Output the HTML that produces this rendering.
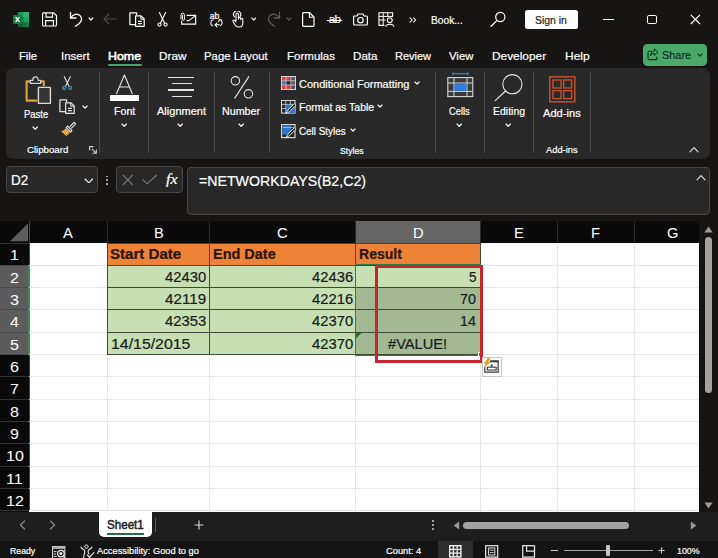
<!DOCTYPE html><html><head><meta charset="utf-8"><title>Excel</title><style>
*{box-sizing:border-box;margin:0;padding:0}
html,body{width:718px;height:558px;overflow:hidden;background:#171513}
body{position:relative;font-family:"Liberation Sans",sans-serif;color:#fff;font-size:12px}
.a{position:absolute}
.t{position:absolute;white-space:nowrap;line-height:1;transform-origin:0 0;-webkit-text-stroke:0.2px}
#ribbon{left:6px;top:68.4px;width:703.5px;height:90.8px;background:#292929;border-radius:7px}
.sep{position:absolute;width:1px;background:#4a4a4a;top:72px;height:81px}
.box{position:absolute;border:1px solid #484848;border-radius:4px;background:#282828}
#grid{left:0;top:221px;width:699px;height:290.6px;background:#fff;overflow:hidden}
.ch{position:absolute;top:0;height:22px;background:#0a0a0a}
.rh{position:absolute;left:0;width:29.4px;background:#0a0a0a}
.gl{position:absolute;background:#e7e7e7}
.c{position:absolute}
</style></head><body>
<svg class="a" style="left:13px;top:12px;" width="16" height="15" viewBox="0 0 16 15" fill="none"><rect x="5" y="0" width="11" height="15" rx="1.2" fill="#1f9c60"/>
<rect x="10.5" y="0" width="5.5" height="5" fill="#2db274"/><rect x="10.5" y="5" width="5.5" height="5" fill="#21a366"/>
<rect x="5" y="5" width="5.5" height="5" fill="#107c41"/><rect x="5" y="10" width="5.5" height="5" fill="#185c37"/><rect x="10.5" y="10" width="5.5" height="5" fill="#107c41"/>
<rect x="0" y="3" width="9" height="9" rx="1" fill="#107c41"/>
<path d="M2.6 5.2 L6.4 9.8 M6.4 5.2 L2.6 9.8" stroke="#fff" stroke-width="1.2"/></svg>
<svg class="a" style="left:42px;top:12px;" width="16" height="15" viewBox="0 0 16 15" fill="none"><path d="M1.5 0.8 H11.5 L14.5 3.6 V13 a1 1 0 0 1 -1 1 H1.5 a1 1 0 0 1 -1 -1 V1.8 a1 1 0 0 1 1 -1 Z" stroke="#fff" stroke-width="1.2"/>
<path d="M4 1 V5.2 H10.5 V1" stroke="#fff" stroke-width="1.2"/><path d="M3.6 14 V8.6 H11.4 V14" stroke="#fff" stroke-width="1.2"/></svg>
<svg class="a" style="left:69px;top:11px;" width="14" height="16" viewBox="0 0 14 16" fill="none"><path d="M1.5 1.5 V7 H7" stroke="#fff" stroke-width="1.3" stroke-linecap="round" stroke-linejoin="round"/>
<path d="M1.8 6.8 C4 3.2 8.5 2.2 11 4.6 C13.6 7.2 12.6 10.4 10.2 12.4 L6.5 15.2" stroke="#fff" stroke-width="1.3" stroke-linecap="round"/></svg>
<svg class="a" style="left:87.91px;top:17.17px;" width="5.771999999999999" height="4.064" viewBox="0 0 5.771999999999999 4.064" fill="none"><path d="M1 1 L2.8859999999999997 3.064 L4.771999999999999 1" stroke="#fff" stroke-width="1.15" stroke-linecap="round" stroke-linejoin="round"/></svg>
<svg class="a" style="left:103px;top:13px;" width="14" height="12" viewBox="0 0 14 12" fill="none"><path d="M13.5 6 H1.2 M6 1 L1 6 L6 11" stroke="#4e4e4e" stroke-width="1.15" stroke-linecap="round" stroke-linejoin="round"/></svg>
<svg class="a" style="left:128.6px;top:12px;" width="16" height="15" viewBox="0 0 16 15" fill="none"><path d="M6 12.6 H0.9 V0.8 H7.6 V3" stroke="#fff" stroke-width="1.2" stroke-linejoin="round"/>
<path d="M6.6 3.8 H12 L15.2 7 V14.3 H6.6 Z" stroke="#fff" stroke-width="1.2" stroke-linejoin="round"/>
<path d="M11.8 4 V7.2 H15" stroke="#fff" stroke-width="1"/><path d="M9 9.4 H12.8 M9 11.6 H12.8" stroke="#fff" stroke-width="1.1"/></svg>
<svg class="a" style="left:157px;top:12px;" width="11" height="15" viewBox="0 0 11 15" fill="none"><path d="M2.4 0.6 L7.4 10.8 M8.6 0.6 L3.6 10.8" stroke="#fff" stroke-width="1.1" stroke-linecap="round"/>
<circle cx="2.5" cy="12.6" r="1.6" stroke="#fff" stroke-width="1.05"/><circle cx="8.5" cy="12.6" r="1.6" stroke="#fff" stroke-width="1.05"/></svg>
<svg class="a" style="left:180px;top:11.6px;" width="17" height="14" viewBox="0 0 17 14" fill="none"><path d="M6.6 3.4 H15.6 V12.2 H1.6 V9" stroke="#fff" stroke-width="1.2"/><path d="M15.6 3.6 L8.4 9 L6.6 8.2" stroke="#fff" stroke-width="1.05"/>
<path d="M1 7 V2.8 a1.7 1.7 0 0 1 3.4 0 V7.4 a1 1 0 0 1 -2 0 V3.2" stroke="#fff" stroke-width="1" stroke-linecap="round"/></svg>
<span class="t" style="left:209.8px;top:11.6px;font-size:8.6px;color:#fff;letter-spacing:-0.2px">ab</span>
<svg class="a" style="left:209px;top:18.6px;" width="15" height="9" viewBox="0 0 15 9" fill="none"><path d="M4.4 0.8 C1.2 1.2 0.8 5.6 3.6 6.8" stroke="#fff" stroke-width="1.05" stroke-linecap="round"/>
<path d="M10.4 5.8 H6.2 M8 3.8 L6 5.8 L8 7.8" stroke="#fff" stroke-width="1.05" stroke-linecap="round" stroke-linejoin="round"/>
<path d="M10.6 0.6 C13.6 1.4 13.8 5 11.6 6.6 M9.6 2.6 L10.6 0.5 L12.8 1.2" stroke="#fff" stroke-width="1.05" stroke-linecap="round" stroke-linejoin="round"/></svg>
<svg class="a" style="left:231px;top:11px;" width="14" height="17" viewBox="0 0 14 17" fill="none"><path d="M5 9.5 V3.2 a1.2 1.2 0 0 1 2.4 0 V8 M7.4 7.4 a1.1 1.1 0 0 1 2.2 0.2 V8.6 M9.6 8.2 a1.1 1.1 0 0 1 2.2 0.3 V11.5 C11.8 14 10.6 16 8.4 16 H7.4 C5.6 16 4.6 15 3.6 13.2 L2 10.4 C1.6 9.4 2.8 8.6 3.6 9.4 L5 11" stroke="#fff" stroke-width="1.1" stroke-linecap="round" stroke-linejoin="round"/>
<path d="M3.4 5.8 A3.6 3.6 0 1 1 9.2 5.4" stroke="#fff" stroke-width="1.1" stroke-linecap="round"/></svg>
<svg class="a" style="left:250.51px;top:17.17px;" width="5.771999999999999" height="4.064" viewBox="0 0 5.771999999999999 4.064" fill="none"><path d="M1 1 L2.8859999999999997 3.064 L4.771999999999999 1" stroke="#fff" stroke-width="1.15" stroke-linecap="round" stroke-linejoin="round"/></svg>
<svg class="a" style="left:267px;top:11px;" width="14" height="16" viewBox="0 0 14 16" fill="none"><path d="M12.5 1.5 V7 H7" stroke="#5a5a5a" stroke-width="1.3" stroke-linecap="round" stroke-linejoin="round"/>
<path d="M12.2 6.8 C10 3.2 5.5 2.2 3 4.6 C0.4 7.2 1.4 10.4 3.8 12.4 L7.5 15.2" stroke="#5a5a5a" stroke-width="1.3" stroke-linecap="round"/></svg>
<svg class="a" style="left:285.91px;top:17.17px;" width="5.771999999999999" height="4.064" viewBox="0 0 5.771999999999999 4.064" fill="none"><path d="M1 1 L2.8859999999999997 3.064 L4.771999999999999 1" stroke="#5a5a5a" stroke-width="1.15" stroke-linecap="round" stroke-linejoin="round"/></svg>
<svg class="a" style="left:302px;top:12px;" width="13" height="15" viewBox="0 0 13 15" fill="none"><path d="M1.6 0.7 H7.6 L12 5 V13.3 a1 1 0 0 1 -1 1 H1.6 a1 1 0 0 1 -1 -1 V1.7 a1 1 0 0 1 1 -1 Z" stroke="#fff" stroke-width="1.2"/><path d="M7.4 0.9 V5.2 H11.8" stroke="#fff" stroke-width="1.1"/></svg>
<span class="t" style="left:328.8px;top:14.2px;font-size:11.5px;color:#fff;letter-spacing:-0.6px">ab</span>
<div class="a" style="left:327.2px;top:20.2px;width:15px;height:1.1px;background:#fff"></div>
<svg class="a" style="left:353px;top:12.6px;" width="15" height="13" viewBox="0 0 15 13" fill="none"><path d="M1.6 3 H4 L5 1 H10 L11 3 H13.4 a1 1 0 0 1 1 1 V11 a1 1 0 0 1 -1 1 H1.6 a1 1 0 0 1 -1 -1 V4 a1 1 0 0 1 1 -1 Z" stroke="#fff" stroke-width="1.2"/><circle cx="7.5" cy="7.2" r="2.7" stroke="#fff" stroke-width="1.2"/></svg>
<svg class="a" style="left:378px;top:12px;" width="17" height="15" viewBox="0 0 17 15" fill="none"><path d="M6.5 13.4 H1 V0.8 H14.6 V5" stroke="#fff" stroke-width="1.1"/><path d="M1 4.4 H14.6 M1 8 H7.5 M5.2 0.8 V13.4 M9.8 0.8 V5" stroke="#fff" stroke-width="1"/>
<circle cx="11.8" cy="8.2" r="2.4" stroke="#fff" stroke-width="1.1"/><path d="M7.8 14.6 C8 11.4 15.6 11.4 15.8 14.6" stroke="#fff" stroke-width="1.1"/></svg>
<svg class="a" style="left:408.6px;top:17.4px;" width="8" height="6" viewBox="0 0 8 6" fill="none"><path d="M1 0.8 L3.2 3 L1 5.2 M4.6 0.8 L6.8 3 L4.6 5.2" stroke="#fff" stroke-width="1.05" stroke-linecap="round" stroke-linejoin="round"/></svg>
<span class="t" style="left:431.30px;top:14.90px;font-size:10.8px;color:#fff;transform:scaleX(0.9452);">Book...</span>
<svg class="a" style="left:490px;top:11px;" width="16" height="16" viewBox="0 0 16 16" fill="none"><circle cx="10.3" cy="6" r="4.6" stroke="#fff" stroke-width="1.2"/><path d="M7 9.4 L1.2 15.2" stroke="#fff" stroke-width="1.3" stroke-linecap="round"/></svg>
<div class="a" style="left:525.2px;top:10.4px;width:52.4px;height:18.4px;background:#fff;border-radius:2.5px"></div>
<span class="t" style="left:535.30px;top:14.90px;font-size:10.8px;color:#1a1a1a;transform:scaleX(0.9653);">Sign in</span>
<div class="a" style="left:602.5px;top:19px;width:11.5px;height:1.2px;background:#fff"></div>
<div class="a" style="left:647.2px;top:14.6px;width:9.8px;height:9.8px;border:1.2px solid #fff;border-radius:1.8px"></div>
<svg class="a" style="left:690.2px;top:14.2px;" width="11" height="11" viewBox="0 0 11 11" fill="none"><path d="M0.8 0.8 L10 10 M10 0.8 L0.8 10" stroke="#fff" stroke-width="1.2"/></svg>
<span class="t" style="left:18.50px;top:50.60px;font-size:11.4px;color:#fff;transform:scaleX(0.9862);">File</span>
<span class="t" style="left:61.20px;top:50.60px;font-size:11.4px;color:#fff;transform:scaleX(1.0035);">Insert</span>
<span class="t" style="left:108.30px;top:50.60px;font-size:11.4px;color:#fff;transform:scaleX(1.0875);-webkit-text-stroke:0.55px">Home</span>
<span class="t" style="left:158.50px;top:50.60px;font-size:11.4px;color:#fff;transform:scaleX(1.0331);">Draw</span>
<span class="t" style="left:204.00px;top:50.60px;font-size:11.4px;color:#fff;transform:scaleX(0.9967);">Page Layout</span>
<span class="t" style="left:286.90px;top:50.60px;font-size:11.4px;color:#fff;transform:scaleX(1.0118);">Formulas</span>
<span class="t" style="left:353.00px;top:50.60px;font-size:11.4px;color:#fff;transform:scaleX(1.0203);">Data</span>
<span class="t" style="left:394.60px;top:50.60px;font-size:11.4px;color:#fff;transform:scaleX(0.9654);">Review</span>
<span class="t" style="left:449.00px;top:50.60px;font-size:11.4px;color:#fff;transform:scaleX(0.9955);">View</span>
<span class="t" style="left:492.40px;top:50.60px;font-size:11.4px;color:#fff;transform:scaleX(1.0426);">Developer</span>
<span class="t" style="left:564.60px;top:50.60px;font-size:11.4px;color:#fff;transform:scaleX(1.0501);">Help</span>
<div class="a" style="left:108px;top:63.8px;width:34px;height:1.9px;background:#45a66c;border-radius:1px"></div>
<div class="a" style="left:643px;top:43.6px;width:63.6px;height:22px;background:#49a86a;border-radius:4.5px"></div>
<svg class="a" style="left:647px;top:48.2px;" width="12" height="13" viewBox="0 0 12 13" fill="none"><path d="M4.5 3.2 H2.2 a1.2 1.2 0 0 0 -1.2 1.2 V10.4 a1.2 1.2 0 0 0 1.2 1.2 H8.6 a1.2 1.2 0 0 0 1.2 -1.2 V9" stroke="#0e2e1a" stroke-width="1.1" stroke-linecap="round"/>
<path d="M7.4 1 L11 4.2 L7.4 7.4 V5.4 C5.4 5.4 4.2 6.2 3.4 8 C3.6 5 5 3.2 7.4 3 Z" stroke="#0e2e1a" stroke-width="1" stroke-linejoin="round"/></svg>
<span class="t" style="left:662.40px;top:49.60px;font-size:11.4px;color:#0e2e1a;transform:scaleX(0.9560);">Share</span>
<svg class="a" style="left:696.91px;top:53.17px;" width="5.771999999999999" height="4.064" viewBox="0 0 5.771999999999999 4.064" fill="none"><path d="M1 1 L2.8859999999999997 3.064 L4.771999999999999 1" stroke="#0e2e1a" stroke-width="1.15" stroke-linecap="round" stroke-linejoin="round"/></svg>
<div id="ribbon" class="a"></div>
<div class="sep" style="left:99.2px"></div>
<div class="sep" style="left:148px"></div>
<div class="sep" style="left:214.2px"></div>
<div class="sep" style="left:269.2px"></div>
<div class="sep" style="left:435px"></div>
<div class="sep" style="left:484px"></div>
<div class="sep" style="left:533.2px"></div>
<div class="sep" style="left:590px"></div>
<svg class="a" style="left:24px;top:75px;" width="29" height="30" viewBox="0 0 29 30" fill="none"><path d="M6.4 6.4 H2.6 V25.6 H13" stroke="#dfa040" stroke-width="2.1" stroke-linejoin="round"/><path d="M16.6 6.4 H19.8 V11" stroke="#dfa040" stroke-width="2.1" stroke-linejoin="round"/>
<path d="M6.4 8.4 V5.4 H8.8 C8.8 0.8 14.2 0.8 14.2 5.4 H16.6 V8.4 Z" stroke="#d4d4d4" stroke-width="1.2" fill="#292929" stroke-linejoin="round"/>
<rect x="14.4" y="12.4" width="12" height="16" rx="0.5" stroke="#dadada" stroke-width="1.4" fill="#353535"/></svg>
<span class="t" style="left:23.80px;top:108.90px;font-size:10.8px;color:#fff;transform:scaleX(0.8770);">Paste</span>
<svg class="a" style="left:32.19px;top:125.8px;" width="6.428" height="4.4079999999999995" viewBox="0 0 6.428 4.4079999999999995" fill="none"><path d="M1 1 L3.214 3.408 L5.428 1" stroke="#fff" stroke-width="1.15" stroke-linecap="round" stroke-linejoin="round"/></svg>
<svg class="a" style="left:62.4px;top:76px;" width="11" height="15" viewBox="0 0 11 15" fill="none"><path d="M2.2 0.6 L6.8 9.8 M8.4 0.6 L3.8 9.8" stroke="#e8e8e8" stroke-width="1.05" stroke-linecap="round"/>
<circle cx="2.4" cy="11.8" r="1.55" stroke="#4a9be0" stroke-width="1.15"/><circle cx="8.2" cy="11.8" r="1.55" stroke="#4a9be0" stroke-width="1.15"/></svg>
<svg class="a" style="left:59.4px;top:98.8px;" width="16" height="15" viewBox="0 0 16 15" fill="none"><path d="M6 12.6 H0.9 V0.8 H7.6 V3" stroke="#e8e8e8" stroke-width="1.2" stroke-linejoin="round"/>
<path d="M6.6 3.8 H12 L15.2 7 V14.3 H6.6 Z" stroke="#e8e8e8" stroke-width="1.2" stroke-linejoin="round"/>
<path d="M11.8 4 V7.2 H15" stroke="#e8e8e8" stroke-width="1"/><path d="M9 9.4 H12.8 M9 11.6 H12.8" stroke="#e8e8e8" stroke-width="1.1"/></svg>
<svg class="a" style="left:81.55px;top:104.88px;" width="6.1" height="4.236000000000001" viewBox="0 0 6.1 4.236000000000001" fill="none"><path d="M1 1 L3.05 3.236 L5.1 1" stroke="#fff" stroke-width="1.15" stroke-linecap="round" stroke-linejoin="round"/></svg>
<svg class="a" style="left:60px;top:122px;" width="16" height="15" viewBox="0 0 16 15" fill="none"><path d="M9.6 4.8 L13.4 1 a1.1 1.1 0 0 1 1.6 1.6 L11.2 6.4" stroke="#e8e8e8" stroke-width="1.1" stroke-linejoin="round"/>
<path d="M7.6 4.2 L12 8.6 L10.6 10 L6.2 5.6 Z" stroke="#e8e8e8" stroke-width="1.1" stroke-linejoin="round" />
<path d="M5.6 6.2 L10 10.6 L6.4 14 L0.8 9.2 C2.8 9 4.4 8 5.6 6.2 Z" fill="#e6a23c"/></svg>
<span class="t" style="left:26.80px;top:144.90px;font-size:9.8px;color:#fff;transform:scaleX(0.9846);">Clipboard</span>
<svg class="a" style="left:88.8px;top:146.2px;" width="9" height="9" viewBox="0 0 9 9" fill="none"><path d="M0.6 4.6 V0.6 H4.6" stroke="#d0d0d0" stroke-width="1.1"/><path d="M2.8 2.8 L7.2 7.2 M7.3 3.4 V7.3 H3.4" stroke="#d0d0d0" stroke-width="1.1"/></svg>
<svg class="a" style="left:115px;top:74px;" width="19" height="21" viewBox="0 0 19 21" fill="none"><path d="M1.4 20 L9.4 1 L17.4 20 M4.4 13 H14.4" stroke="#e8e8e8" stroke-width="1.1" stroke-linejoin="round"/></svg>
<div class="a" style="left:110px;top:94.8px;width:29.4px;height:6.6px;background:#fff"></div>
<span class="t" style="left:113.80px;top:105.95px;font-size:10.7px;color:#fff;transform:scaleX(0.9953);">Font</span>
<svg class="a" style="left:120.79px;top:123.1px;" width="6.428" height="4.4079999999999995" viewBox="0 0 6.428 4.4079999999999995" fill="none"><path d="M1 1 L3.214 3.408 L5.428 1" stroke="#fff" stroke-width="1.15" stroke-linecap="round" stroke-linejoin="round"/></svg>
<div class="a" style="left:168.2px;top:77px;width:26.3px;height:1.3px;background:#e4e4e4"></div>
<div class="a" style="left:171.5px;top:83.2px;width:20.0px;height:1.3px;background:#e4e4e4"></div>
<div class="a" style="left:168.2px;top:89.4px;width:26.3px;height:1.3px;background:#e4e4e4"></div>
<div class="a" style="left:171.5px;top:95.5px;width:20.0px;height:1.3px;background:#e4e4e4"></div>
<span class="t" style="left:156.90px;top:105.95px;font-size:10.7px;color:#fff;transform:scaleX(1.0323);">Alignment</span>
<svg class="a" style="left:177.29px;top:123.1px;" width="6.428" height="4.4079999999999995" viewBox="0 0 6.428 4.4079999999999995" fill="none"><path d="M1 1 L3.214 3.408 L5.428 1" stroke="#fff" stroke-width="1.15" stroke-linecap="round" stroke-linejoin="round"/></svg>
<svg class="a" style="left:230px;top:75px;" width="24" height="25" viewBox="0 0 24 25" fill="none"><circle cx="5.4" cy="5.8" r="4.2" stroke="#e8e8e8" stroke-width="1.1"/><circle cx="18.4" cy="18.8" r="4.2" stroke="#e8e8e8" stroke-width="1.1"/><path d="M19 1.4 L4.6 23.4" stroke="#e8e8e8" stroke-width="1.1"/></svg>
<span class="t" style="left:222.30px;top:105.95px;font-size:10.7px;color:#fff;transform:scaleX(1.0016);">Number</span>
<svg class="a" style="left:238.19px;top:123.1px;" width="6.428" height="4.4079999999999995" viewBox="0 0 6.428 4.4079999999999995" fill="none"><path d="M1 1 L3.214 3.408 L5.428 1" stroke="#fff" stroke-width="1.15" stroke-linecap="round" stroke-linejoin="round"/></svg>
<svg class="a" style="left:280.5px;top:76.2px;" width="15" height="14" viewBox="0 0 15 14" fill="none"><rect x="0.5" y="0.5" width="14" height="13" fill="#2a2a2a" stroke="#d8d8d8" stroke-width="1"/>
<rect x="1" y="1" width="8.6" height="3.4" fill="#e23c3c"/><rect x="1" y="9.4" width="8.6" height="3.6" fill="#e23c3c"/>
<rect x="1.2" y="5.2" width="3.2" height="3.6" fill="#3b7fd6"/><rect x="10.4" y="1" width="3.6" height="12" fill="#555"/>
<path d="M0.5 4.8 H14.5 M0.5 9 H14.5 M5 0.5 V13.5 M10 0.5 V13.5" stroke="#d8d8d8" stroke-width="0.8"/></svg>
<span class="t" style="left:299.10px;top:78.90px;font-size:10.8px;color:#fff;transform:scaleX(1.0170);">Conditional Formatting</span>
<svg class="a" style="left:413.75px;top:80.88px;" width="6.1" height="4.236000000000001" viewBox="0 0 6.1 4.236000000000001" fill="none"><path d="M1 1 L3.05 3.236 L5.1 1" stroke="#fff" stroke-width="1.15" stroke-linecap="round" stroke-linejoin="round"/></svg>
<svg class="a" style="left:280.5px;top:100px;" width="16" height="15" viewBox="0 0 16 15" fill="none"><rect x="0.5" y="0.5" width="13.6" height="12.6" fill="#2a2a2a" stroke="#d8d8d8" stroke-width="1"/>
<path d="M0.5 4.4 H14 M0.5 8.6 H14 M4.8 0.5 V13 M9.4 0.5 V13" stroke="#d8d8d8" stroke-width="0.8"/>
<rect x="5.2" y="4.8" width="8.6" height="8" fill="#2f78d0"/>
<path d="M13.4 3.6 L7 10 L4.6 13.8 L8.6 11.6 L15 5.2 Z" fill="#2a2a2a" stroke="#f0f0f0" stroke-width="0.9" stroke-linejoin="round"/></svg>
<span class="t" style="left:299.10px;top:101.90px;font-size:10.8px;color:#fff;transform:scaleX(0.9738);">Format as Table</span>
<svg class="a" style="left:376.75px;top:104.38px;" width="6.1" height="4.236000000000001" viewBox="0 0 6.1 4.236000000000001" fill="none"><path d="M1 1 L3.05 3.236 L5.1 1" stroke="#fff" stroke-width="1.15" stroke-linecap="round" stroke-linejoin="round"/></svg>
<svg class="a" style="left:280.5px;top:123.6px;" width="16" height="15" viewBox="0 0 16 15" fill="none"><rect x="0.6" y="0.6" width="13.4" height="13" fill="#2a2a2a" stroke="#d8d8d8" stroke-width="1.2"/>
<rect x="1.6" y="1.6" width="8.6" height="9" fill="#2f78d0"/><path d="M1.6 3.4 H13" stroke="#d8d8d8" stroke-width="0.7"/>
<path d="M13.4 3.6 L7 10 L4.6 13.8 L8.6 11.6 L15 5.2 Z" fill="#2a2a2a" stroke="#f0f0f0" stroke-width="0.9" stroke-linejoin="round"/></svg>
<span class="t" style="left:299.10px;top:125.90px;font-size:10.8px;color:#fff;transform:scaleX(0.9132);">Cell Styles</span>
<svg class="a" style="left:349.55px;top:128.38px;" width="6.1" height="4.236000000000001" viewBox="0 0 6.1 4.236000000000001" fill="none"><path d="M1 1 L3.05 3.236 L5.1 1" stroke="#fff" stroke-width="1.15" stroke-linecap="round" stroke-linejoin="round"/></svg>
<span class="t" style="left:340.20px;top:145.90px;font-size:9.8px;color:#fff;transform:scaleX(0.8837);">Styles</span>
<svg class="a" style="left:446.5px;top:72px;" width="27" height="26" viewBox="0 0 27 26" fill="none"><path d="M6 1.8 H21 M6 0.4 V3.2 M21 0.4 V3.2" stroke="#4a9be0" stroke-width="1.1"/>
<rect x="0.8" y="5.6" width="25" height="19" stroke="#d8d8d8" stroke-width="1.1" fill="#3a3a3a"/>
<path d="M0.8 11 H25.8 M0.8 19.4 H25.8 M7 5.6 V24.6 M20 5.6 V24.6" stroke="#d8d8d8" stroke-width="1"/>
<rect x="7.5" y="11.5" width="12" height="7.4" fill="#2f7fe0"/></svg>
<span class="t" style="left:449.30px;top:105.95px;font-size:10.7px;color:#fff;transform:scaleX(0.8737);">Cells</span>
<svg class="a" style="left:456.09px;top:123.1px;" width="6.428" height="4.4079999999999995" viewBox="0 0 6.428 4.4079999999999995" fill="none"><path d="M1 1 L3.214 3.408 L5.428 1" stroke="#fff" stroke-width="1.15" stroke-linecap="round" stroke-linejoin="round"/></svg>
<svg class="a" style="left:494px;top:73px;" width="30" height="29" viewBox="0 0 30 29" fill="none"><circle cx="18.4" cy="11.2" r="9.6" stroke="#e8e8e8" stroke-width="1.1"/><path d="M11.6 18 L1.2 27.6" stroke="#e8e8e8" stroke-width="1.2" stroke-linecap="round"/></svg>
<span class="t" style="left:492.70px;top:105.95px;font-size:10.7px;color:#fff;transform:scaleX(0.9804);">Editing</span>
<svg class="a" style="left:505.29px;top:123.1px;" width="6.428" height="4.4079999999999995" viewBox="0 0 6.428 4.4079999999999995" fill="none"><path d="M1 1 L3.214 3.408 L5.428 1" stroke="#fff" stroke-width="1.15" stroke-linecap="round" stroke-linejoin="round"/></svg>
<svg class="a" style="left:549px;top:75.6px;" width="27" height="27" viewBox="0 0 27 27" fill="none"><rect x="0.8" y="0.8" width="25" height="25" stroke="#c9502c" stroke-width="1.5"/>
<rect x="4" y="4" width="8" height="8" stroke="#c9502c" stroke-width="1.4"/><rect x="14.6" y="4" width="8" height="8" stroke="#c9502c" stroke-width="1.4"/>
<rect x="4" y="14.6" width="8" height="8" stroke="#c9502c" stroke-width="1.4"/><rect x="14.6" y="14.6" width="8" height="8" stroke="#c9502c" stroke-width="1.4"/></svg>
<span class="t" style="left:543.30px;top:107.90px;font-size:10.8px;color:#fff;transform:scaleX(1.0297);">Add-ins</span>
<span class="t" style="left:545.80px;top:144.90px;font-size:9.8px;color:#fff;transform:scaleX(0.9512);">Add-ins</span>
<svg class="a" style="left:689.4px;top:145.6px;" width="10" height="7" viewBox="0 0 10 7" fill="none"><path d="M1 5.8 L5 1.6 L9 5.8" stroke="#e0e0e0" stroke-width="1.15" stroke-linecap="round" stroke-linejoin="round"/></svg>
<div class="box" style="left:6.2px;top:166px;width:92px;height:27px"></div>
<span class="t" style="left:11.40px;top:173.90px;font-size:13.8px;color:#fff;transform:scaleX(0.9794);">D2</span>
<svg class="a" style="left:83.75px;top:177.71px;" width="9.708" height="5.784000000000001" viewBox="0 0 9.708 5.784000000000001" fill="none"><path d="M1 1 L4.854 4.784000000000001 L8.708 1" stroke="#fff" stroke-width="1.1" stroke-linecap="round" stroke-linejoin="round"/></svg>
<div class="a" style="left:106.2px;top:175.6px;width:1.8px;height:1.8px;background:#d0d0d0;border-radius:1px"></div>
<div class="a" style="left:106.2px;top:179.4px;width:1.8px;height:1.8px;background:#d0d0d0;border-radius:1px"></div>
<div class="a" style="left:106.2px;top:183.2px;width:1.8px;height:1.8px;background:#d0d0d0;border-radius:1px"></div>
<div class="box" style="left:116px;top:166px;width:67px;height:27px"></div>
<svg class="a" style="left:122.4px;top:174.3px;" width="12" height="12" viewBox="0 0 12 12" fill="none"><path d="M0.8 0.8 L10.8 10.8 M10.8 0.8 L0.8 10.8" stroke="#808080" stroke-width="1.1"/></svg>
<svg class="a" style="left:142px;top:174.3px;" width="16" height="11" viewBox="0 0 16 11" fill="none"><path d="M0.8 5.6 L5 9.8 L15 0.8" stroke="#808080" stroke-width="1.1"/></svg>
<span class="t" style="left:166.40px;top:171.05px;font-size:15.5px;color:#fff;transform:scaleX(1.0394);font-family:'Liberation Serif',serif;font-style:italic;">fx</span>
<div class="box" style="left:187px;top:166.5px;width:522.5px;height:48.2px"></div>
<span class="t" style="left:198.90px;top:174.10px;font-size:14.4px;color:#fff;transform:scaleX(0.9842);">=NETWORKDAYS(B2,C2)</span>
<svg class="a" style="left:696.4px;top:174.2px;" width="10" height="7" viewBox="0 0 10 7" fill="none"><path d="M1 5.8 L5 1.6 L9 5.8" stroke="#e0e0e0" stroke-width="1.15" stroke-linecap="round" stroke-linejoin="round"/></svg>
<div id="grid" class="a">
<div class="ch" style="left:0;width:699px"></div>
<div class="a" style="left:355.8px;top:0;width:124.4px;height:22px;background:#666"></div>
<div class="a" style="left:28.9px;top:0;width:1px;height:22px;background:#2a2a2a"></div>
<div class="a" style="left:106.9px;top:0;width:1px;height:22px;background:#2a2a2a"></div>
<div class="a" style="left:209.1px;top:0;width:1px;height:22px;background:#2a2a2a"></div>
<div class="a" style="left:355.3px;top:0;width:1px;height:22px;background:#2a2a2a"></div>
<div class="a" style="left:479.7px;top:0;width:1px;height:22px;background:#2a2a2a"></div>
<div class="a" style="left:556.7px;top:0;width:1px;height:22px;background:#2a2a2a"></div>
<div class="a" style="left:633.9px;top:0;width:1px;height:22px;background:#2a2a2a"></div>
<div class="rh" style="top:22px;height:269px"></div>
<div class="a" style="left:0;top:44.33px;width:29.4px;height:89.32px;background:#5c5c5c"></div>
<div class="a" style="left:0;top:21.50px;width:29px;height:1px;background:#333"></div>
<div class="a" style="left:0;top:43.83px;width:29px;height:1px;background:#4a4a4a"></div>
<div class="a" style="left:0;top:66.16px;width:29px;height:1px;background:#4a4a4a"></div>
<div class="a" style="left:0;top:88.49px;width:29px;height:1px;background:#4a4a4a"></div>
<div class="a" style="left:0;top:110.82px;width:29px;height:1px;background:#4a4a4a"></div>
<div class="a" style="left:0;top:133.15px;width:29px;height:1px;background:#4a4a4a"></div>
<div class="a" style="left:0;top:155.48px;width:29px;height:1px;background:#333"></div>
<div class="a" style="left:0;top:177.81px;width:29px;height:1px;background:#333"></div>
<div class="a" style="left:0;top:200.14px;width:29px;height:1px;background:#333"></div>
<div class="a" style="left:0;top:222.47px;width:29px;height:1px;background:#333"></div>
<div class="a" style="left:0;top:244.80px;width:29px;height:1px;background:#333"></div>
<div class="a" style="left:0;top:267.13px;width:29px;height:1px;background:#333"></div>
<div class="a" style="left:0;top:289.46px;width:29px;height:1px;background:#333"></div>
<div class="a" style="left:28.8px;top:0;width:1px;height:290px;background:#444"></div>
<div class="a" style="left:28px;top:44.33px;width:1.6px;height:89.32px;background:#3c8a55"></div>
<svg class="a" style="left:0;top:0" width="30" height="22"><path d="M28 2.6 V20.2 H10 Z" fill="#5e5e5e"/></svg>
<div class="gl" style="left:29.4px;top:43.83px;width:670px;height:1px"></div>
<div class="gl" style="left:29.4px;top:66.16px;width:670px;height:1px"></div>
<div class="gl" style="left:29.4px;top:88.49px;width:670px;height:1px"></div>
<div class="gl" style="left:29.4px;top:110.82px;width:670px;height:1px"></div>
<div class="gl" style="left:29.4px;top:133.15px;width:670px;height:1px"></div>
<div class="gl" style="left:29.4px;top:155.48px;width:670px;height:1px"></div>
<div class="gl" style="left:29.4px;top:177.81px;width:670px;height:1px"></div>
<div class="gl" style="left:29.4px;top:200.14px;width:670px;height:1px"></div>
<div class="gl" style="left:29.4px;top:222.47px;width:670px;height:1px"></div>
<div class="gl" style="left:29.4px;top:244.80px;width:670px;height:1px"></div>
<div class="gl" style="left:29.4px;top:267.13px;width:670px;height:1px"></div>
<div class="gl" style="left:29.4px;top:289.46px;width:670px;height:1px"></div>
<div class="gl" style="left:106.9px;top:22px;width:1px;height:269px"></div>
<div class="gl" style="left:209.1px;top:22px;width:1px;height:269px"></div>
<div class="gl" style="left:355.3px;top:22px;width:1px;height:269px"></div>
<div class="gl" style="left:479.7px;top:22px;width:1px;height:269px"></div>
<div class="gl" style="left:556.7px;top:22px;width:1px;height:269px"></div>
<div class="gl" style="left:633.9px;top:22px;width:1px;height:269px"></div>
<div class="c" style="left:107.4px;top:22.0px;width:372.8px;height:22.33px;background:#ee8236;"></div>
<div class="c" style="left:107.4px;top:44.33px;width:248.4px;height:89.32px;background:#c6e0b4;"></div>
<div class="c" style="left:355.8px;top:44.33px;width:124.4px;height:22.33px;background:#c6e0b4;"></div>
<div class="c" style="left:355.8px;top:66.66px;width:124.4px;height:66.99px;background:#a2b994;"></div>
<div class="a" style="left:107.4px;top:21.50px;width:372.8px;height:1px;background:#3d4a36"></div>
<div class="a" style="left:107.4px;top:43.83px;width:372.8px;height:1px;background:#3d4a36"></div>
<div class="a" style="left:107.4px;top:66.16px;width:372.8px;height:1px;background:#3d4a36"></div>
<div class="a" style="left:107.4px;top:88.49px;width:372.8px;height:1px;background:#3d4a36"></div>
<div class="a" style="left:107.4px;top:110.82px;width:372.8px;height:1px;background:#3d4a36"></div>
<div class="a" style="left:107.4px;top:133.15px;width:372.8px;height:1px;background:#3d4a36"></div>
<div class="a" style="left:106.9px;top:22.0px;width:1px;height:111.65px;background:#3d4a36"></div>
<div class="a" style="left:209.1px;top:22.0px;width:1px;height:111.65px;background:#3d4a36"></div>
<div class="a" style="left:355.3px;top:22.0px;width:1px;height:111.65px;background:#3d4a36"></div>
<div class="a" style="left:479.7px;top:22.0px;width:1px;height:111.65px;background:#3d4a36"></div>
<div class="a" style="left:354.8px;top:43.33px;width:126.4px;height:91.32px;border:1.6px solid #2f7d4a"></div>
<div class="a" style="left:477.7px;top:131.15px;width:5px;height:5px;background:#2f7d4a;border:1px solid #fff"></div>
<svg class="a" style="left:356.3px;top:111.82px" width="6" height="6"><path d="M0 0 H5.5 L0 5.5 Z" fill="#1e7a3c"/></svg>
<div class="a" style="left:375px;top:44.3px;width:108px;height:98px;border:3px solid #c5262e"></div>
<div class="a" style="left:481.8px;top:136.2px;width:20.2px;height:19.4px;background:#fdfdfd;border:1px solid #c6c6c6"></div>
</div>
<svg class="a" style="left:482px;top:357px;" width="20" height="20" viewBox="0 0 20 20" fill="none"><path d="M8.6 4.2 H16.2 V15.2 H2.8 V10" stroke="#3a3a3a" stroke-width="1.2"/><path d="M8 4.4 H16.6" stroke="#3a3a3a" stroke-width="1.8"/>
<rect x="5.4" y="10.2" width="8.8" height="2.8" stroke="#3a3a3a" stroke-width="1.1" fill="#fff"/><path d="M9.8 7.2 V10 M8.6 8.6 H11" stroke="#3a3a3a" stroke-width="0.9"/>
<path d="M5.6 1.6 L2.2 6.4 H4.4 L2.4 10 L8 5 H5.4 L8 1.6 Z" fill="#f0a020" stroke="#c87800" stroke-width="0.5" stroke-linejoin="round"/></svg>
<span class="t" style="left:63.46px;top:225.20px;font-size:15.2px;color:#fff;transform:scaleX(0.9700);-webkit-text-stroke:0">A</span>
<span class="t" style="left:153.60px;top:225.20px;font-size:15.2px;color:#fff;transform:scaleX(0.9700);-webkit-text-stroke:0">B</span>
<span class="t" style="left:277.39px;top:225.20px;font-size:15.2px;color:#fff;transform:scaleX(0.9700);-webkit-text-stroke:0">C</span>
<span class="t" style="left:412.69px;top:225.20px;font-size:15.2px;color:#fff;transform:scaleX(0.9700);-webkit-text-stroke:0">D</span>
<span class="t" style="left:513.80px;top:225.20px;font-size:15.2px;color:#fff;transform:scaleX(0.9700);-webkit-text-stroke:0">E</span>
<span class="t" style="left:591.30px;top:225.20px;font-size:15.2px;color:#fff;transform:scaleX(0.9700);-webkit-text-stroke:0">F</span>
<span class="t" style="left:666.95px;top:225.20px;font-size:15.2px;color:#fff;transform:scaleX(0.9700);-webkit-text-stroke:0">G</span>
<span class="t" style="left:9.96px;top:247.10px;font-size:15.4px;color:#fff;transform:scaleX(1.0400);-webkit-text-stroke:0">1</span>
<span class="t" style="left:9.96px;top:270.10px;font-size:15.4px;color:#fff;transform:scaleX(1.0400);-webkit-text-stroke:0">2</span>
<span class="t" style="left:9.96px;top:292.10px;font-size:15.4px;color:#fff;transform:scaleX(1.0400);-webkit-text-stroke:0">3</span>
<span class="t" style="left:9.96px;top:314.10px;font-size:15.4px;color:#fff;transform:scaleX(1.0400);-webkit-text-stroke:0">4</span>
<span class="t" style="left:9.96px;top:337.10px;font-size:15.4px;color:#fff;transform:scaleX(1.0400);-webkit-text-stroke:0">5</span>
<span class="t" style="left:9.96px;top:359.10px;font-size:15.4px;color:#fff;transform:scaleX(1.0400);-webkit-text-stroke:0">6</span>
<span class="t" style="left:9.96px;top:381.10px;font-size:15.4px;color:#fff;transform:scaleX(1.0400);-webkit-text-stroke:0">7</span>
<span class="t" style="left:9.96px;top:404.10px;font-size:15.4px;color:#fff;transform:scaleX(1.0400);-webkit-text-stroke:0">8</span>
<span class="t" style="left:9.96px;top:426.10px;font-size:15.4px;color:#fff;transform:scaleX(1.0400);-webkit-text-stroke:0">9</span>
<span class="t" style="left:5.51px;top:448.10px;font-size:15.4px;color:#fff;transform:scaleX(1.0400);-webkit-text-stroke:0">10</span>
<span class="t" style="left:6.07px;top:471.10px;font-size:15.4px;color:#fff;transform:scaleX(1.0400);-webkit-text-stroke:0">11</span>
<span class="t" style="left:5.51px;top:493.10px;font-size:15.4px;color:#fff;transform:scaleX(1.0400);-webkit-text-stroke:0">12</span>
<span class="t" style="left:110.30px;top:247.30px;font-size:14px;color:#2a1408;transform:scaleX(1.0763);font-weight:bold;">Start Date</span>
<span class="t" style="left:213.10px;top:247.30px;font-size:14px;color:#2a1408;transform:scaleX(1.0331);font-weight:bold;">End Date</span>
<span class="t" style="left:358.90px;top:247.30px;font-size:14px;color:#2a1408;transform:scaleX(1.0030);font-weight:bold;">Result</span>
<span class="t" style="left:165.10px;top:270.30px;font-size:14px;color:#1a1a1a;transform:scaleX(1.0560);">42430</span>
<span class="t" style="left:165.10px;top:292.30px;font-size:14px;color:#1a1a1a;transform:scaleX(1.0853);">42119</span>
<span class="t" style="left:165.10px;top:314.30px;font-size:14px;color:#1a1a1a;transform:scaleX(1.0560);">42353</span>
<span class="t" style="left:110.90px;top:337.30px;font-size:14px;color:#1a1a1a;transform:scaleX(1.1332);">14/15/2015</span>
<span class="t" style="left:311.50px;top:270.30px;font-size:14px;color:#1a1a1a;transform:scaleX(1.0560);">42436</span>
<span class="t" style="left:311.50px;top:292.30px;font-size:14px;color:#1a1a1a;transform:scaleX(1.0560);">42216</span>
<span class="t" style="left:311.50px;top:314.30px;font-size:14px;color:#1a1a1a;transform:scaleX(1.0560);">42370</span>
<span class="t" style="left:311.50px;top:337.30px;font-size:14px;color:#1a1a1a;transform:scaleX(1.0560);">42370</span>
<span class="t" style="left:468.70px;top:270.30px;font-size:14px;color:#1a1a1a;transform:scaleX(0.9653);">5</span>
<span class="t" style="left:460.30px;top:292.30px;font-size:14px;color:#1a1a1a;transform:scaleX(1.0232);">70</span>
<span class="t" style="left:460.30px;top:314.30px;font-size:14px;color:#1a1a1a;transform:scaleX(1.0232);">14</span>
<span class="t" style="left:388.10px;top:337.30px;font-size:14px;color:#1a1a1a;transform:scaleX(1.0449);">#VALUE!</span>
<svg class="a" style="left:703.5px;top:226px;" width="9" height="7" viewBox="0 0 9 7" fill="none"><path d="M4.5 0.6 L8.6 6.4 H0.4 Z" fill="#9a9a9a"/></svg>
<div class="a" style="left:704.5px;top:237px;width:7px;height:155.5px;background:#a2a2a2;border-radius:3.5px"></div>
<svg class="a" style="left:703.5px;top:501.5px;" width="9" height="7" viewBox="0 0 9 7" fill="none"><path d="M4.5 6.4 L8.6 0.6 H0.4 Z" fill="#9a9a9a"/></svg>
<div class="a" style="left:0;top:511.6px;width:718px;height:29.2px;background:#1e1e1e"></div>
<svg class="a" style="left:19.4px;top:520px;" width="7" height="10" viewBox="0 0 7 10" fill="none"><path d="M5.6 1 L1.4 5 L5.6 9" stroke="#8a8a8a" stroke-width="1.15" stroke-linecap="round" stroke-linejoin="round"/></svg>
<svg class="a" style="left:48.6px;top:520px;" width="7" height="10" viewBox="0 0 7 10" fill="none"><path d="M1.4 1 L5.6 5 L1.4 9" stroke="#8a8a8a" stroke-width="1.15" stroke-linecap="round" stroke-linejoin="round"/></svg>
<div class="a" style="left:99.2px;top:511px;width:52.6px;height:25.8px;background:#fff;border-radius:0 0 5px 5px"></div>
<span class="t" style="left:106.90px;top:519.00px;font-size:12.6px;color:#202020;transform:scaleX(0.9213);-webkit-text-stroke:0.5px">Sheet1</span>
<div class="a" style="left:106.9px;top:533px;width:37.1px;height:1.7px;background:#1f7046"></div>
<div class="a" style="left:154.8px;top:518px;width:1px;height:13.5px;background:#5a5a5a"></div>
<svg class="a" style="left:194px;top:520px;" width="10" height="10" viewBox="0 0 10 10" fill="none"><path d="M5 0.6 V9.4 M0.6 5 H9.4" stroke="#d8d8d8" stroke-width="1.15"/></svg>
<div class="a" style="left:432.2px;top:520px;width:2px;height:2px;background:#d0d0d0;border-radius:1px"></div>
<div class="a" style="left:432.2px;top:524.2px;width:2px;height:2px;background:#d0d0d0;border-radius:1px"></div>
<div class="a" style="left:432.2px;top:528.4px;width:2px;height:2px;background:#d0d0d0;border-radius:1px"></div>
<svg class="a" style="left:452.5px;top:521px;" width="7" height="9" viewBox="0 0 7 9" fill="none"><path d="M6.2 0.6 V8.4 L0.6 4.5 Z" fill="#9a9a9a"/></svg>
<div class="a" style="left:463.3px;top:521.8px;width:165.7px;height:7.4px;background:#a2a2a2;border-radius:3.7px"></div>
<svg class="a" style="left:689.5px;top:521px;" width="7" height="9" viewBox="0 0 7 9" fill="none"><path d="M0.8 0.6 V8.4 L6.4 4.5 Z" fill="#9a9a9a"/></svg>
<div class="a" style="left:0;top:540.8px;width:718px;height:17.4px;background:#131313"></div>
<span class="t" style="left:9.80px;top:545.90px;font-size:9.8px;color:#fff;transform:scaleX(0.8898);">Ready</span>
<svg class="a" style="left:52px;top:546px;" width="14" height="12" viewBox="0 0 14 12" fill="none"><rect x="0.6" y="0.6" width="12.2" height="12" stroke="#e0e0e0" stroke-width="1.1"/><rect x="0.6" y="0.6" width="12.2" height="2.4" fill="#a8a8a8"/>
<path d="M2 5.6 H4.6 M2 8 H4 M2 10.4 H4.6" stroke="#e0e0e0" stroke-width="1"/>
<circle cx="8.9" cy="7.6" r="3.3" stroke="#f0f0f0" stroke-width="1.2" fill="#141414"/><circle cx="8.9" cy="7.6" r="1.5" fill="#f0f0f0"/><path d="M11.2 10.2 L13.4 12.4" stroke="#e0e0e0" stroke-width="1.2"/></svg>
<svg class="a" style="left:79.5px;top:544px;" width="16" height="14" viewBox="0 0 16 14" fill="none"><circle cx="6.4" cy="2.6" r="1.7" stroke="#e8e8e8" stroke-width="1"/>
<path d="M1 3 C1.6 5.4 4.4 5 4.6 6.6 V9.4 L3.2 13.8 M11.8 3 C11.2 5.4 8.4 5 8.2 6.6 V8.6 L9 10" stroke="#e8e8e8" stroke-width="1.1" stroke-linecap="round" stroke-linejoin="round"/>
<path d="M7.4 11 L9.6 13.4 L13.8 8.6" stroke="#e8e8e8" stroke-width="1.2" stroke-linecap="round" stroke-linejoin="round"/></svg>
<span class="t" style="left:96.60px;top:545.90px;font-size:9.8px;color:#fff;transform:scaleX(0.9505);">Accessibility: Good to go</span>
<span class="t" style="left:386.00px;top:545.90px;font-size:9.8px;color:#fff;transform:scaleX(0.9502);">Count: 4</span>
<div class="a" style="left:437.8px;top:540.8px;width:35.5px;height:17.4px;background:#2e2e2e"></div>
<svg class="a" style="left:448.6px;top:544.6px;" width="13" height="13" viewBox="0 0 13 13" fill="none"><rect x="0.7" y="0.7" width="11.2" height="11.2" stroke="#f4f4f4" stroke-width="1.4"/><path d="M0.7 4.4 H11.9 M0.7 8.2 H11.9 M4.4 0.7 V11.9 M8.2 0.7 V11.9" stroke="#f4f4f4" stroke-width="1.3"/></svg>
<svg class="a" style="left:485.2px;top:544.6px;" width="14" height="13" viewBox="0 0 14 13" fill="none"><rect x="0.7" y="0.7" width="12" height="11.4" stroke="#e0e0e0" stroke-width="1.3"/><rect x="3.6" y="3" width="6.2" height="7" stroke="#e0e0e0" stroke-width="1"/><path d="M4.8 5.2 H8.6 M4.8 7.6 H8.6" stroke="#e0e0e0" stroke-width="0.9"/></svg>
<svg class="a" style="left:522.2px;top:544.6px;" width="14" height="13" viewBox="0 0 14 13" fill="none"><rect x="0.7" y="0.7" width="11.8" height="11.4" stroke="#e0e0e0" stroke-width="1.3"/><path d="M4.6 0.7 V6.2 H12.5" stroke="#e0e0e0" stroke-width="1.2"/></svg>
<div class="a" style="left:551.2px;top:550.3px;width:6.6px;height:1.2px;background:#d0d0d0"></div>
<div class="a" style="left:563.5px;top:550.3px;width:89.3px;height:1.2px;background:#a8a8a8"></div>
<div class="a" style="left:606.3px;top:545.4px;width:4.2px;height:11px;background:#c4c4c4;border-radius:1px"></div>
<svg class="a" style="left:657.7px;top:547.4px;" width="7" height="7" viewBox="0 0 7 7" fill="none"><path d="M3.5 0.4 V6.6 M0.4 3.5 H6.6" stroke="#d0d0d0" stroke-width="1.1"/></svg>
<span class="t" style="left:676.80px;top:545.90px;font-size:9.8px;color:#fff;transform:scaleX(0.9008);">100%</span>
</body></html>
